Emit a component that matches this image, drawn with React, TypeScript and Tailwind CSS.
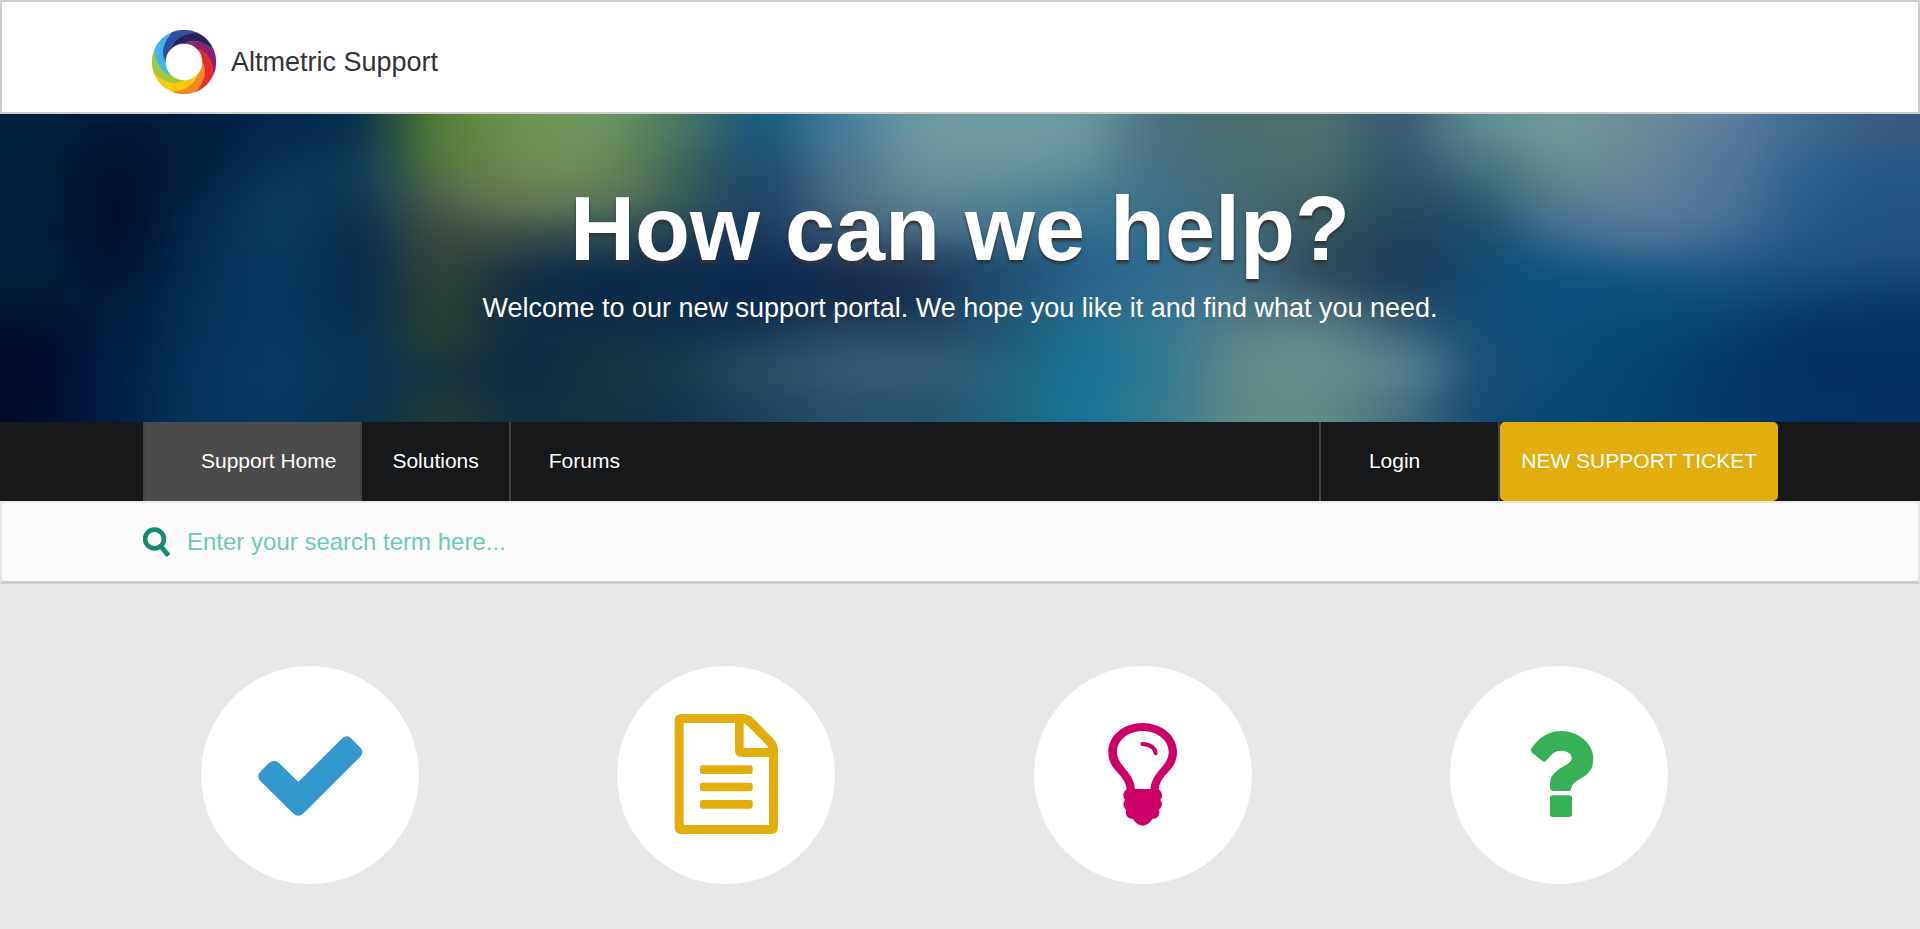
import type { ReactNode } from 'react';

const BLADES = ['#f08a24', '#fdca0a', '#a3c63c', '#40b5e8', '#2f509f', '#28235e', '#8e2070', '#e42b25'];

// Colour samples of the banner art, left to right and top to bottom
const BANNER = [
    ['#02223c', '#021833', '#021f3d', '#06294f', '#06304a', '#5a7f33', '#6f9350', '#6f9662', '#4a7560', '#12587d', '#427f9c', '#6f999e', '#6f9b9f', '#6d9a9f', '#476f7c', '#4a6c6c', '#50706e', '#36566e', '#628f92', '#70999a', '#6f8a94', '#60809c', '#3f6a92', '#3a5a80'],
    ['#021e36', '#010f29', '#03203c', '#07345c', '#0b3c55', '#55763e', '#708e50', '#708e58', '#3c6256', '#164a70', '#4a7488', '#6a939a', '#6a959a', '#5f9399', '#416c7e', '#4a6c6e', '#4c6c6a', '#30526a', '#44747e', '#66908e', '#6a8694', '#56769a', '#2a6492', '#235a8a'],
    ['#02203a', '#010b25', '#04284a', '#083f60', '#0b3450', '#54614c', '#6a7a56', '#647a5a', '#3c5f58', '#183f66', '#4f6c80', '#62868f', '#528890', '#44808e', '#3a7088', '#466a70', '#426062', '#2a4c60', '#2a5c6c', '#5a828c', '#68829a', '#50769a', '#265f8c', '#225688'],
    ['#021f3a', '#010b24', '#052f50', '#073d63', '#072d48', '#414b40', '#3f5048', '#2f4f52', '#1f4052', '#153662', '#3a5474', '#4a6a82', '#3a6f8c', '#2f6c90', '#336d8a', '#42697a', '#36545c', '#223f54', '#155070', '#3a6c90', '#557599', '#3f6a96', '#245a8a', '#205488'],
    ['#021f38', '#01102e', '#04305a', '#053b64', '#052c48', '#344638', '#15303f', '#0d2b48', '#0d2d4c', '#0d2a50', '#182c4c', '#1f3350', '#1a4a70', '#24608a', '#2d6c92', '#3c6a80', '#2e4856', '#1c3854', '#0c4a74', '#0f5884', '#1a5c88', '#1f5c88', '#1a5280', '#174c78'],
    ['#011b30', '#021c38', '#04345a', '#043a64', '#062c4b', '#2c4030', '#102c44', '#0c2a48', '#0c2b48', '#0c284e', '#13284a', '#182e4c', '#1f5276', '#2a688e', '#326e90', '#447280', '#466470', '#244660', '#0d4a74', '#0a5080', '#074e7c', '#0c4a78', '#08406e', '#053a68'],
    ['#010c28', '#021c44', '#04345c', '#043a64', '#06324f', '#2b402e', '#0f2c44', '#14303f', '#13324a', '#163a56', '#2c4c66', '#2a4c66', '#1f5a74', '#1a7090', '#2f7890', '#5f8688', '#668c8c', '#3f6a78', '#14507a', '#074c7a', '#034a72', '#03406c', '#013364', '#013364'],
    ['#010926', '#021f4c', '#04365f', '#043c66', '#07355a', '#17333e', '#0d2a40', '#193440', '#193a48', '#2a5262', '#3c5f74', '#3a6076', '#23647c', '#14729a', '#2b7690', '#638c88', '#648f8c', '#5f8c92', '#1a5078', '#094c78', '#024470', '#023a68', '#013262', '#013264'],
    ['#010b26', '#03204a', '#04365f', '#043a64', '#07324e', '#233a34', '#112f42', '#16323f', '#14344a', '#1c4058', '#26506a', '#24526a', '#22647c', '#16749a', '#337a8c', '#608a86', '#628c86', '#46707c', '#124a74', '#064874', '#02446e', '#02396a', '#013464', '#013262'],
];

const Logo = () => (
    <svg viewBox="-97 -97 194 194" className="size-16" aria-hidden="true">
        {BLADES.map((color, i) => (
            <path
                key={color}
                transform={`rotate(${i * 45})`}
                fill={color}
                stroke={color}
                strokeWidth="1"
                d="M56 0Q78.4 40 36.3 89.9A97 97 0 0 1-37.9 89.3Q27.2 83.7 39.6 39.6A56 56 0 0 0 56 0Z"
            />
        ))}
    </svg>
);

const BannerArt = () => (
    <svg
        viewBox="0 0 24 9"
        preserveAspectRatio="none"
        className="absolute inset-0 h-full w-full"
        aria-hidden="true"
    >
        <filter
            id="soften"
            filterUnits="userSpaceOnUse"
            x="-2"
            y="-2"
            width="28"
            height="13"
            colorInterpolationFilters="sRGB"
        >
            <feGaussianBlur stdDeviation="0.4 0.5" />
        </filter>
        <g filter="url(#soften)">
            {BANNER.map((row, y) =>
                row.map((color, x) => {
                    // outer cells run past the edge so that the blur doesn't fade there
                    const left = x === 0 ? -2 : x;
                    const top = y === 0 ? -2 : y;
                    const right = x === row.length - 1 ? x + 3 : x + 1.03;
                    const bottom = y === BANNER.length - 1 ? y + 3 : y + 1.03;
                    return (
                        <rect
                            key={`${x}-${y}`}
                            x={left}
                            y={top}
                            width={right - left}
                            height={bottom - top}
                            fill={color}
                        />
                    );
                })
            )}
        </g>
    </svg>
);

const SearchIcon = () => (
    <svg viewBox="0 0 27 30" className="h-[30px] w-[27px]" fill="none" stroke="#158a70" aria-hidden="true">
        <circle cx="11.5" cy="12" r="9.4" strokeWidth="4.6" />
        <path d="M17.500 19L25.500 28.500" strokeWidth="5" />
    </svg>
);

interface Topic {
    label: string;
    viewBox: string;
    icon: ReactNode;
}

const topics: Topic[] = [
    {
        label: 'Getting started',
        viewBox: '33 48 654 654',
        icon: (
            <path
                fill="#3399cc"
                d="M325 396L268 340Q252 324 236 340L212 364Q197 379 212 394L309 490Q325 505 341 490L511 320Q524 306 511 293L485 266Q470 252 455 266Z"
            />
        ),
    },
    {
        label: 'Guides',
        viewBox: '21 48 654 654',
        icon: (
            <g fill="#e3ad0e">
                <path
                    fillRule="evenodd"
                    d="M214 192H398Q416 192 431 206L490 266Q504 281 504 300V532Q504 552 484 552H214Q194 552 194 532V212Q194 192 214 192ZM221 219V525H477V321H395Q375 321 375 301V219ZM401 219V294H476Q474 289 469 284L411 226Q406 221 401 219Z"
                />
                <rect x="270" y="346" width="158" height="26" rx="7" />
                <rect x="270" y="398" width="158" height="26" rx="7" />
                <rect x="270" y="450" width="158" height="26" rx="7" />
            </g>
        ),
    },
    {
        label: 'Tips',
        viewBox: '42 48 654 654',
        icon: (
            <g fill="#cc0066">
                <path
                    fillRule="evenodd"
                    d="M320 420C316 368 265 365 265 306C265 255 312 219 368 219C423 219 471 255 471 306C471 365 420 368 416 420ZM345 418C341 362 291 350 291 306C291 268 328 243 368 243C408 243 446 268 446 306C446 350 396 362 391 418Z"
                />
                <path d="M322 417H414Q426 424 426 437Q426 445 421 450Q426 456 426 463Q426 473 417 479Q424 504 397 507Q386 526 368 527Q350 526 339 507Q312 504 318 479Q310 473 310 463Q310 456 315 450Q310 444 310 436Q310 424 322 417Z" />
                <path d="M367 282Q404 284 407 310" fill="none" stroke="#cc0066" strokeWidth="12" strokeLinecap="round" />
            </g>
        ),
    },
    {
        label: 'Questions',
        viewBox: '60 48 654 654',
        icon: (
            <g fill="#37b056">
                <path d="M304 296Q338 243 396 243C440 243 490 277 490 326C490 390 430 380 424 416Q423 423 416 423H370Q360 423 360 412V404C360 352 425 350 425 324C425 312 411 302 394 302C372 302 366 312 350 331Q344 338 337 333L306 308Q301 303 304 296Z" />
                <rect x="360" y="436" width="66" height="65" rx="8" />
            </g>
        ),
    },
];

const App = () => {
    return (
        <div className="min-h-screen bg-[#e8e8e8] font-['Liberation_Sans',Arial,sans-serif]">
            <header className="border-2 border-[#cccccc] bg-white px-[150px] pt-7 pb-[18px]">
                <a href="#" className="flex h-16 items-center gap-[15px] text-[#333333]">
                    <Logo />
                    <span className="text-[27px] leading-8">Altmetric Support</span>
                </a>
            </header>

            <section className="relative overflow-hidden bg-[#0d2b44] pt-[65px] pb-[98px] text-center text-white">
                <BannerArt />
                <h1 className="relative text-[90px] leading-[100px] font-bold [text-shadow:0_3px_3px_#333333]">
                    How can we help?
                </h1>
                <p className="relative pt-[13px] text-[27px] leading-8">
                    Welcome to our new support portal. We hope you like it and find what you need.
                </p>
            </section>

            <nav className="flex h-[79px] justify-between bg-[#17181a] pr-[142px] pl-[143px] text-[21px] leading-6 text-white">
                <div className="flex">
                    <a
                        href="#"
                        aria-current="page"
                        className="flex items-center border-x-2 border-[#444444] bg-[#4b4b4b] pr-6 pb-0.5 pl-14"
                    >
                        Support Home
                    </a>
                    <a href="#" className="flex items-center border-r-2 border-[#444444] px-[30px] pb-0.5">
                        Solutions
                    </a>
                    <a href="#" className="flex items-center px-[38px] pb-0.5">
                        Forums
                    </a>
                </div>
                <div className="flex">
                    <a href="#" className="flex items-center border-x-2 border-[#444444] pr-[78px] pb-0.5 pl-12">
                        Login
                    </a>
                    <a href="#" className="flex items-center rounded-[5px] bg-[#e3ad0e] px-[21px] pb-0.5">
                        NEW SUPPORT TICKET
                    </a>
                </div>
            </nav>

            <form
                role="search"
                className="flex h-[83px] items-center gap-[17px] border-2 border-b-[3px] border-[#e8e8e8] border-b-[#cccccc] bg-[#fcfcfc] px-[141px]"
            >
                <label htmlFor="search" aria-label="Search" className="shrink-0">
                    <SearchIcon />
                </label>
                <input
                    id="search"
                    type="text"
                    aria-label="Search"
                    placeholder="Enter your search term here..."
                    className="h-10 min-w-0 flex-1 bg-transparent text-2xl text-[#158a70] outline-none placeholder:text-[#6ccab5]"
                />
            </form>

            <main className="grid grid-cols-4 pt-[82px] pr-[153px] pb-11 pl-[102px]">
                {topics.map((topic) => (
                    <a
                        key={topic.label}
                        href="#"
                        aria-label={topic.label}
                        className="size-[218px] justify-self-center overflow-hidden rounded-full bg-white"
                    >
                        <svg viewBox={topic.viewBox} className="h-full w-full" aria-hidden="true">
                            {topic.icon}
                        </svg>
                    </a>
                ))}
            </main>
        </div>
    );
};

export default App;
